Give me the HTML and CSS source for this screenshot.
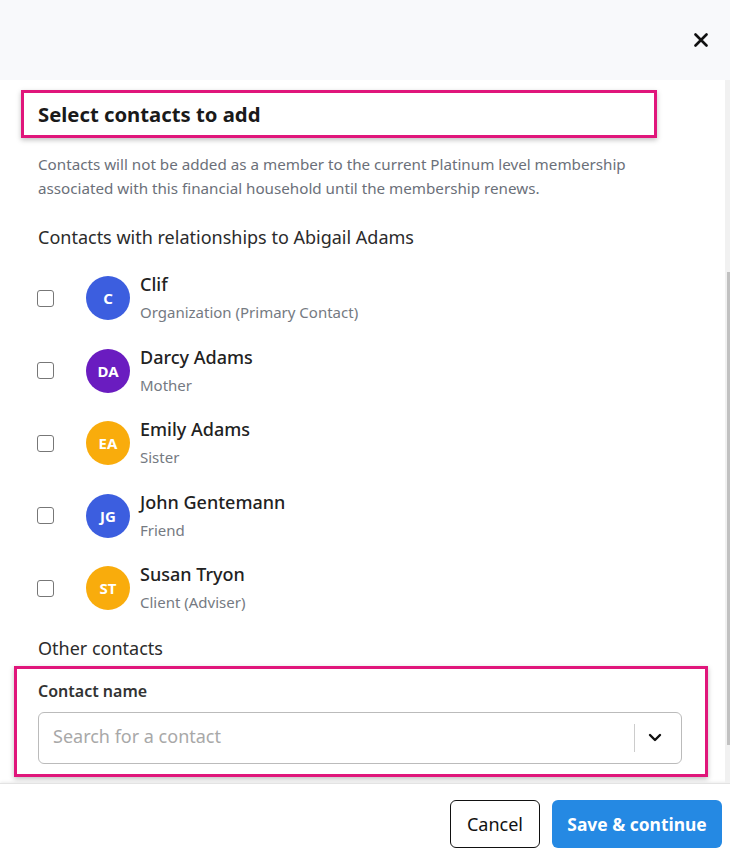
FILE: index.html
```html
<!DOCTYPE html>
<html lang="en">
<head>
  <meta charset="UTF-8" />
  <title>Select contacts</title>
  <link rel="stylesheet" href="styles.css">
</head>
<body>

<div class="header">
  <button class="close" aria-label="Close">
    <svg width="14" height="14" viewBox="0 0 14 14"><path d="M1.5 1.5 L12.5 12.5 M12.5 1.5 L1.5 12.5" stroke="#111" stroke-width="2.6" stroke-linecap="round"/></svg>
  </button>
</div>

<div class="scroll-area">
  <div class="content">
    <div class="highlight heading-box">
      <h2>Select contacts to add</h2>
    </div>
    <p class="note">Contacts will not be added as a member to the current Platinum level membership associated with this financial household until the membership renews.</p>

    <div class="section-title">Contacts with relationships to Abigail Adams</div>

    <div class="contact-list">
      <label class="contact">
        <input type="checkbox" />
        <span class="avatar blue">C</span>
        <span class="info">
          <span class="name">Clif</span>
          <span class="relation">Organization (Primary Contact)</span>
        </span>
      </label>
      <label class="contact">
        <input type="checkbox" />
        <span class="avatar purple">DA</span>
        <span class="info">
          <span class="name">Darcy Adams</span>
          <span class="relation">Mother</span>
        </span>
      </label>
      <label class="contact">
        <input type="checkbox" />
        <span class="avatar orange">EA</span>
        <span class="info">
          <span class="name">Emily Adams</span>
          <span class="relation">Sister</span>
        </span>
      </label>
      <label class="contact">
        <input type="checkbox" />
        <span class="avatar blue">JG</span>
        <span class="info">
          <span class="name">John Gentemann</span>
          <span class="relation">Friend</span>
        </span>
      </label>
      <label class="contact">
        <input type="checkbox" />
        <span class="avatar orange">ST</span>
        <span class="info">
          <span class="name">Susan Tryon</span>
          <span class="relation">Client (Adviser)</span>
        </span>
      </label>
    </div>

    <div class="section-title other">Other contacts</div>

    <div class="highlight search-box">
      <div class="field-label">Contact name</div>
      <div class="combo">
        <input type="text" placeholder="Search for a contact" />
        <span class="divider"></span>
        <svg class="chevron" width="14" height="9" viewBox="0 0 14 9"><path d="M2 2 L7 7 L12 2" fill="none" stroke="#111" stroke-width="2.4" stroke-linecap="round" stroke-linejoin="round"/></svg>
      </div>
    </div>
  </div>
  <div class="scrollbar"><div class="thumb"></div></div>
</div>

<div class="footer">
  <button class="btn cancel">Cancel</button>
  <button class="btn save">Save &amp; continue</button>
</div>

</body>
</html>
```

FILE: styles.css
```css
* { box-sizing: border-box; }
body {
  margin: 0;
  font-family: 'Noto Sans', 'Open Sans', sans-serif;
  color: #222;
  background: #fff;
  width: 730px;
  height: 861px;
  overflow: hidden;
}
.header {
  height: 80px;
  background: #f8f9fb;
  display: flex;
  justify-content: flex-end;
  align-items: center;
  padding-right: 21px;
}
.close {
  background: none;
  border: none;
  padding: 0;
  width: 16px;
  height: 16px;
  display: flex;
  align-items: center;
  justify-content: center;
  cursor: pointer;
}
.scroll-area {
  height: 703px;
  display: flex;
}
.content {
  flex: 1;
  padding: 10px 0 0 37px;
  overflow: hidden;
}
.scrollbar {
  width: 5px;
  background: #f1f1f1;
  display: flex;
  justify-content: flex-end;
  padding-top: 192px;
  padding-bottom: 38px;
}
.thumb {
  width: 3px;
  height: 100%;
  background: #c1c1c1;
}
.highlight {
  border: 3px solid #e0167b;
  box-shadow: 0 2px 5px rgba(0,0,0,0.25);
}
.heading-box {
  margin-left: -16px;
  width: 636px;
  height: 48px;
  padding-left: 14px;
  display: flex;
  align-items: center;
}
h2 {
  margin: 0;
  font-size: 20.3px;
  font-weight: 700;
  color: #1a1a1a;
}
.note {
  margin: 14px 0 0 1px;
  font-size: 15.2px;
  line-height: 24px;
  color: #6b7079;
  width: 640px;
}
.section-title {
  margin-top: 24px;
  margin-left: 1px;
  font-size: 18px;
  line-height: 26px;
  color: #2b2b2b;
}
.contact-list {
  margin-top: 12px;
}
.contact {
  height: 72.5px;
  display: flex;
  align-items: center;
}
.contact input {
  margin: 0 32px 0 0;
  width: 17px;
  height: 17px;
  appearance: none;
  border: 1.5px solid #777;
  border-radius: 3px;
  background: #fff;
}
.avatar {
  width: 44px;
  height: 44px;
  border-radius: 50%;
  color: #fff;
  font-weight: 700;
  font-size: 15px;
  display: flex;
  align-items: center;
  justify-content: center;
  margin-right: 10px;
}
.blue { background: #3c5edf; }
.purple { background: #6a1cc0; }
.orange { background: #f9ac0c; }
.info {
  display: flex;
  flex-direction: column;
}
.name {
  font-size: 18px;
  line-height: 28px;
  font-weight: 500;
  color: #222;
}
.relation {
  font-size: 15px;
  line-height: 28px;
  color: #757a82;
}
.section-title.other {
  margin-top: 10px;
}
.search-box {
  margin: 5px 0 0 -23px;
  width: 694px;
  height: 111px;
  padding: 9px 23px 0 21px;
}
.field-label {
  font-size: 16px;
  font-weight: 600;
  line-height: 26px;
  color: #333;
}
.combo {
  margin-top: 8px;
  height: 52px;
  border: 1px solid #bbb;
  border-radius: 6px;
  display: flex;
  align-items: center;
  padding: 0 19px 0 14px;
}
.combo input {
  flex: 1;
  border: none;
  outline: none;
  font-family: inherit;
  font-size: 18px;
  color: #222;
  padding: 0 0 4px;
  background: transparent;
}
.combo input::placeholder {
  color: #a8a8a8;
}
.divider {
  width: 1px;
  height: 28px;
  background: #ccc;
  margin: 0 13px 0 10px;
}
.footer {
  height: 78px;
  border-top: 1px solid #e3e3e3;
  box-shadow: 0 -1px 3px rgba(0,0,0,0.08);
  display: flex;
  justify-content: flex-end;
  align-items: flex-start;
  padding: 16px 8px 0 0;
  gap: 12px;
}
.btn {
  height: 48px;
  border-radius: 6px;
  font-family: inherit;
  font-size: 18px;
  cursor: pointer;
}
.cancel {
  width: 90px;
  background: #fff;
  border: 1px solid #111;
  color: #111;
}
.save {
  width: 170px;
  background: #2589e3;
  border: none;
  color: #fff;
  font-weight: 700;
  font-size: 17.4px;
}
```
